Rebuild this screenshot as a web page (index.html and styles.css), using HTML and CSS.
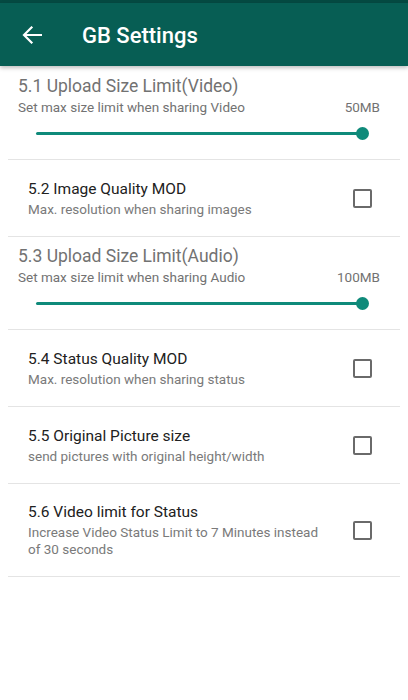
FILE: index.html
```html
<!DOCTYPE html>
<html>
<head>
<meta charset="utf-8">
<link rel="stylesheet" href="styles.css">
</head>
<body>
<div class="statusbar"></div>
<header class="appbar">
  <svg class="back" width="20" height="18" viewBox="0 0 20 18"><path d="M19 9H2.5M9.5 1.5L2 9l7.5 7.5" fill="none" stroke="#fff" stroke-width="2.2" stroke-linecap="square"/></svg>
  <h1 class="title">GB Settings</h1>
</header>
<main class="list">
  <section class="slider-item">
    <div class="s-title">5.1 Upload Size Limit(Video)</div>
    <div class="s-row"><span class="s-sub">Set max size limit when sharing Video</span><span class="s-val">50MB</span></div>
    <div class="slider"><div class="track"></div><div class="thumb"></div></div>
  </section>
  <div class="divider"></div>
  <section class="check-item">
    <div class="texts"><div class="c-title">5.2 Image Quality MOD</div><div class="c-sub">Max. resolution when sharing images</div></div>
    <div class="checkbox"></div>
  </section>
  <div class="divider"></div>
  <section class="slider-item">
    <div class="s-title">5.3 Upload Size Limit(Audio)</div>
    <div class="s-row"><span class="s-sub">Set max size limit when sharing Audio</span><span class="s-val">100MB</span></div>
    <div class="slider"><div class="track"></div><div class="thumb"></div></div>
  </section>
  <div class="divider"></div>
  <section class="check-item">
    <div class="texts"><div class="c-title">5.4 Status Quality MOD</div><div class="c-sub">Max. resolution when sharing status</div></div>
    <div class="checkbox"></div>
  </section>
  <div class="divider"></div>
  <section class="check-item">
    <div class="texts"><div class="c-title">5.5 Original Picture size</div><div class="c-sub">send pictures with original height/width</div></div>
    <div class="checkbox"></div>
  </section>
  <div class="divider"></div>
  <section class="check-item tall">
    <div class="texts"><div class="c-title">5.6 Video limit for Status</div><div class="c-sub">Increase Video Status Limit to 7 Minutes instead of 30 seconds</div></div>
    <div class="checkbox"></div>
  </section>
  <div class="divider"></div>
</main>
</body>
</html>
```

FILE: styles.css
```css
* { box-sizing: border-box; }
html, body { margin: 0; padding: 0; background: #fff; }
body { font-family: Roboto, "Noto Sans", sans-serif; width: 408px; height: 700px; overflow: hidden; }

.statusbar { height: 3px; background: #054a42; }
.appbar {
  height: 63px;
  background: #075e54;
  display: flex;
  align-items: center;
  padding-left: 22px;
  box-shadow: 0 2px 4px rgba(0,0,0,0.25);
  position: relative;
  z-index: 1;
}
.back { margin-top: 1px; }
.title {
  margin: 1px 0 0 40px;
  color: #fff;
  font-size: 22px;
  font-weight: 500;
}

.list { display: flex; flex-direction: column; padding-top: 1px; }
.divider { height: 1px; background: #e4e4e4; margin: 0 8px; }

.slider-item { height: 92px; padding: 8px 28px 0 18px; }
.s-title { font-size: 17.5px; line-height: 22px; color: #727272; font-weight: 400; }
.s-row { display: flex; justify-content: space-between; font-size: 13.5px; line-height: 18px; color: #727272; margin-top: 1px; }
.slider { position: relative; height: 14px; margin: 11px 17px 0 18px; }
.track { position: absolute; left: 0; right: 0; top: 5px; height: 3px; background: #0f8a7a; border-radius: 2px; }
.thumb { position: absolute; right: -6px; top: 0; width: 13px; height: 13px; border-radius: 50%; background: #0f8a7a; }

.check-item { height: 76px; display: flex; align-items: center; padding: 0 36px 0 28px; }
.check-item.tall { height: 92px; }
.texts { flex: 1; max-width: 296px; }
.c-title { font-size: 15.5px; line-height: 20px; color: #212121; font-weight: 400; }
.c-sub { font-size: 13.5px; line-height: 17px; color: #7a7a7a; margin-top: 2px; }
.checkbox { margin-left: auto; width: 19px; height: 19px; border: 2px solid #6a6a6a; border-radius: 2px; }
```
